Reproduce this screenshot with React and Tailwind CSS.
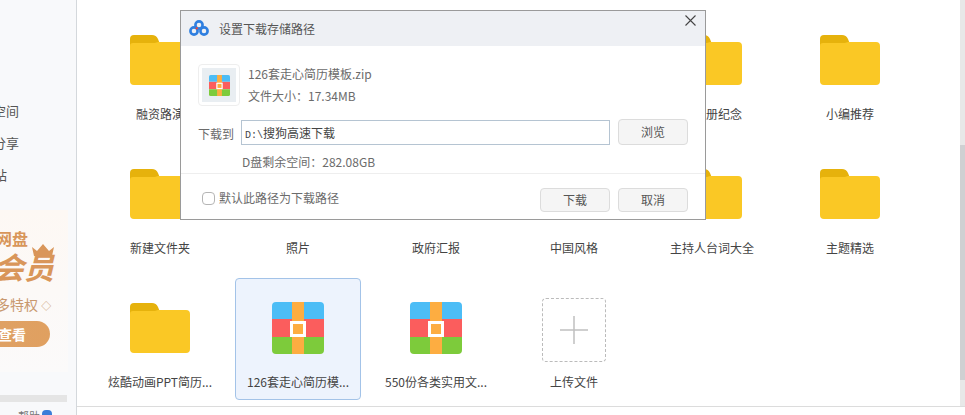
const cjk = { fontFamily: '"Noto Sans CJK SC", "Noto Sans", sans-serif' };

const rows = [
  { name: "融资路演", type: "folder" },
  { name: "团队活动", type: "folder" },
  { name: "工作总结", type: "folder" },
  { name: "公司资料", type: "folder" },
  { name: "毕业册纪念", type: "folder" },
  { name: "小编推荐", type: "folder" },
  { name: "新建文件夹", type: "folder" },
  { name: "照片", type: "folder" },
  { name: "政府汇报", type: "folder" },
  { name: "中国风格", type: "folder" },
  { name: "主持人台词大全", type: "folder" },
  { name: "主题精选", type: "folder" },
  { name: "炫酷动画PPT简历...", type: "folder" },
  { name: "126套走心简历模...", type: "zip", selected: true },
  { name: "550份各类实用文...", type: "zip" },
  { name: "上传文件", type: "upload" },
];

function FolderIcon() {
  return (
    <svg width="60" height="50" viewBox="0 0 60 50">
      <path d="M0 12V4a4 4 0 0 1 4-4h18a7 7 0 0 1 6 4l2 5v6H0z" fill="#e6b20c" />
      <path d="M0 11a4 4 0 0 1 0 0V46a4 4 0 0 0 4 4h52a4 4 0 0 0 4-4V11a4 4 0 0 0-4-4H28l-3 1H3a3 3 0 0 0-3 3z" fill="#fac825" />
    </svg>
  );
}

function ZipIcon({ size = 52 }) {
  return (
    <svg width={size} height={size} viewBox="0 0 52 52">
      <path d="M0 17V4a4 4 0 0 1 4-4h44a4 4 0 0 1 4 4v13z" fill="#4cbdf6" />
      <rect y="17" width="52" height="18" fill="#fb5d5d" />
      <path d="M0 35h52v13a4 4 0 0 1-4 4H4a4 4 0 0 1-4-4z" fill="#7dcb3b" />
      <rect x="20" width="12" height="52" fill="#fdad41" />
      <rect x="19.5" y="20.5" width="13" height="13" fill="#fdad41" stroke="#fff" strokeWidth="3" />
    </svg>
  );
}

function UploadBox() {
  return (
    <div className="w-16 h-16 mt-1 border border-dashed border-[#bbbbbb] rounded-sm flex items-center justify-center">
      <svg width="28" height="28" viewBox="0 0 28 28">
        <path d="M14 0v28M0 14h28" stroke="#c0c0c0" strokeWidth="1.5" />
      </svg>
    </div>
  );
}

function Cell({ item }) {
  return (
    <div
      className={
        "w-[126px] h-[122px] pt-[18px] flex flex-col items-center rounded-sm border " +
        (item.selected ? "bg-[#edf3fd] border-[#a3c3e8]" : "border-transparent")
      }
    >
      <div className="h-16 -mt-px flex items-center justify-center">
        {item.type === "folder" && <FolderIcon />}
        {item.type === "zip" && <ZipIcon />}
        {item.type === "upload" && <UploadBox />}
      </div>
      <div className="mt-3 h-5 leading-5 text-xs text-[#444444] whitespace-nowrap">{item.name}</div>
    </div>
  );
}

function Sidebar() {
  return (
    <div className="w-[77px] shrink-0 h-full bg-[#f8f9fb] border-r border-[#d4d8dc] overflow-hidden pt-[95px]">
      <div className="h-8 leading-8 text-[13px] text-[#555555] whitespace-nowrap -ml-[33px]">隐私空间</div>
      <div className="h-8 leading-8 text-[13px] text-[#555555] whitespace-nowrap -ml-[33px]">好友分享</div>
      <div className="h-8 leading-8 text-[13px] text-[#555555] whitespace-nowrap -ml-[32px]">回收站</div>
      <div className="relative mt-[19px] w-[68px] h-[162px] overflow-hidden bg-gradient-to-b from-[#fdf8f4] to-[#fbfafa] pt-[19px]">
        <div className="h-[18px] leading-[18px] text-[16px] font-bold text-[#d8965a] whitespace-nowrap -ml-[4px]">网盘</div>
        <div className="h-[36px] leading-[36px] mt-[1px] text-[30px] font-bold italic text-[#d9965a] whitespace-nowrap -ml-[6px]">会员</div>
        <svg className="absolute left-[31px] top-[34px]" width="24" height="12" viewBox="0 0 24 12">
          <path d="M1 3l5 4 6-7 6 7 5-4-2 9H3z" fill="#d9965a" />
        </svg>
        <div className="mt-[10px] h-[20px] leading-[20px] text-[14px] text-[#c9986e] whitespace-nowrap -ml-[18px]">
          更多特权 <span className="text-[10px]">◇</span>
        </div>
        <div className="mt-[7px] w-[51px] h-[26px] leading-[26px] rounded-r-full bg-gradient-to-r from-[#dfa164] to-[#e0a060] text-[14px] font-bold text-white whitespace-nowrap -ml-px overflow-hidden">
          <span className="-ml-px">查看</span>
        </div>
      </div>
      <div className="mt-[23px] w-[67px] h-[7px] bg-[#e5e5e5]" />
      <div className="mt-[8px] flex items-start gap-0.5 pl-[18px]">
        <span className="text-[11px] leading-3 text-[#777777]">帮助</span>
        <span className="w-[10px] h-[10px] rounded-sm bg-[#3b7dd8]" />
      </div>
    </div>
  );
}

function Dialog() {
  return (
    <div className="absolute left-[180px] top-[10px] w-[526px] h-[210px] bg-white border border-[#9a9a9a] flex flex-col text-xs text-[#6b6b6b]">
      <div className="h-[35px] shrink-0 bg-[#eef0f4] flex items-center pl-2 relative">
        <svg width="20" height="17" viewBox="0 0 20 17" fill="none">
          <circle cx="5" cy="11" r="3.6" stroke="#2f7fe0" strokeWidth="2.6" />
          <circle cx="15" cy="11" r="3.6" stroke="#2f7fe0" strokeWidth="2.6" />
          <circle cx="10" cy="5" r="3.6" stroke="#2f7fe0" strokeWidth="2.6" />
          <path d="M7 7.5l1.5 1.5" stroke="#e8483f" strokeWidth="2.2" />
        </svg>
        <span className="ml-2.5 text-[#555555]">设置下载存储路径</span>
        <svg className="absolute right-[9px] top-[4px]" width="11" height="11" viewBox="0 0 11 11">
          <path d="M.5.5l10 10M10.5.5l-10 10" stroke="#444444" strokeWidth="1.1" />
        </svg>
      </div>

      <div className="flex pl-[17px] pt-[18px] h-[73px] shrink-0">
        <div className="w-[42px] h-[42px] border border-[#eeeeee] p-[3px] rounded-sm">
          <div className="w-full h-full bg-[#e9eef2] flex items-center justify-center">
            <ZipIcon size={21} />
          </div>
        </div>
        <div className="ml-2">
          <div className="h-[22px] leading-[22px] -mt-[1px]">126套走心简历模板.zip</div>
          <div className="h-[22px] leading-[22px]">文件大小：17.34MB</div>
        </div>
      </div>

      <div className="flex items-center pl-[17px] h-[27px] shrink-0">
        <span className="w-[43px] mt-[2px]">下载到</span>
        <div className="w-[369px] h-[25px] border border-[#b5c4d2] leading-[23px] pl-[3px] text-[#444444] whitespace-nowrap">
          <span className="text-[10px]" style={{ fontFamily: '"Liberation Mono", monospace' }}>D:\</span>搜狗高速下载
        </div>
        <button className="ml-2 w-[70px] h-[26px] -mt-[1px] bg-[#f5f5f5] border border-[#dcdcdc] rounded-sm text-[#555555]">浏览</button>
      </div>

      <div className="pl-[61px] h-[27px] leading-[20px] pt-[6px] shrink-0">D盘剩余空间：282.08GB</div>

      <div className="flex-1 border-t border-[#eeeeee] flex items-start pt-[14px] pl-[21px] pr-[17px]">
        <span className="w-[13px] h-[13px] mt-[4px] border border-[#b5b5b5] rounded-sm bg-white" />
        <span className="ml-1 flex-1 leading-[18px] mt-[1px]">默认此路径为下载路径</span>
        <button className="w-[70px] h-[24px] bg-[#f5f5f5] border border-[#dcdcdc] rounded-sm text-[#555555]">下载</button>
        <button className="ml-2 w-[70px] h-[24px] bg-[#f5f5f5] border border-[#dcdcdc] rounded-sm text-[#555555]">取消</button>
      </div>
    </div>
  );
}

export default function App() {
  return (
    <div className="relative w-[965px] h-[415px] overflow-hidden bg-white flex" style={cjk}>
      <Sidebar />
      <div className="flex-1 flex flex-col">
        <div className="flex-1 flex border-b border-[#dcdcdc]">
          <div className="flex-1 pt-[10px] pl-5">
            <div className="grid grid-cols-[repeat(6,126px)] gap-3">
              {rows.map((item) => (
                <Cell key={item.name} item={item} />
              ))}
            </div>
          </div>
          <div className="w-[5px] h-full bg-[#e8e8e8]">
            <div className="mt-[145px] h-[235px] bg-[#cfd0d2]" />
          </div>
        </div>
        <div className="h-2 shrink-0" />
      </div>
      <Dialog />
    </div>
  );
}
